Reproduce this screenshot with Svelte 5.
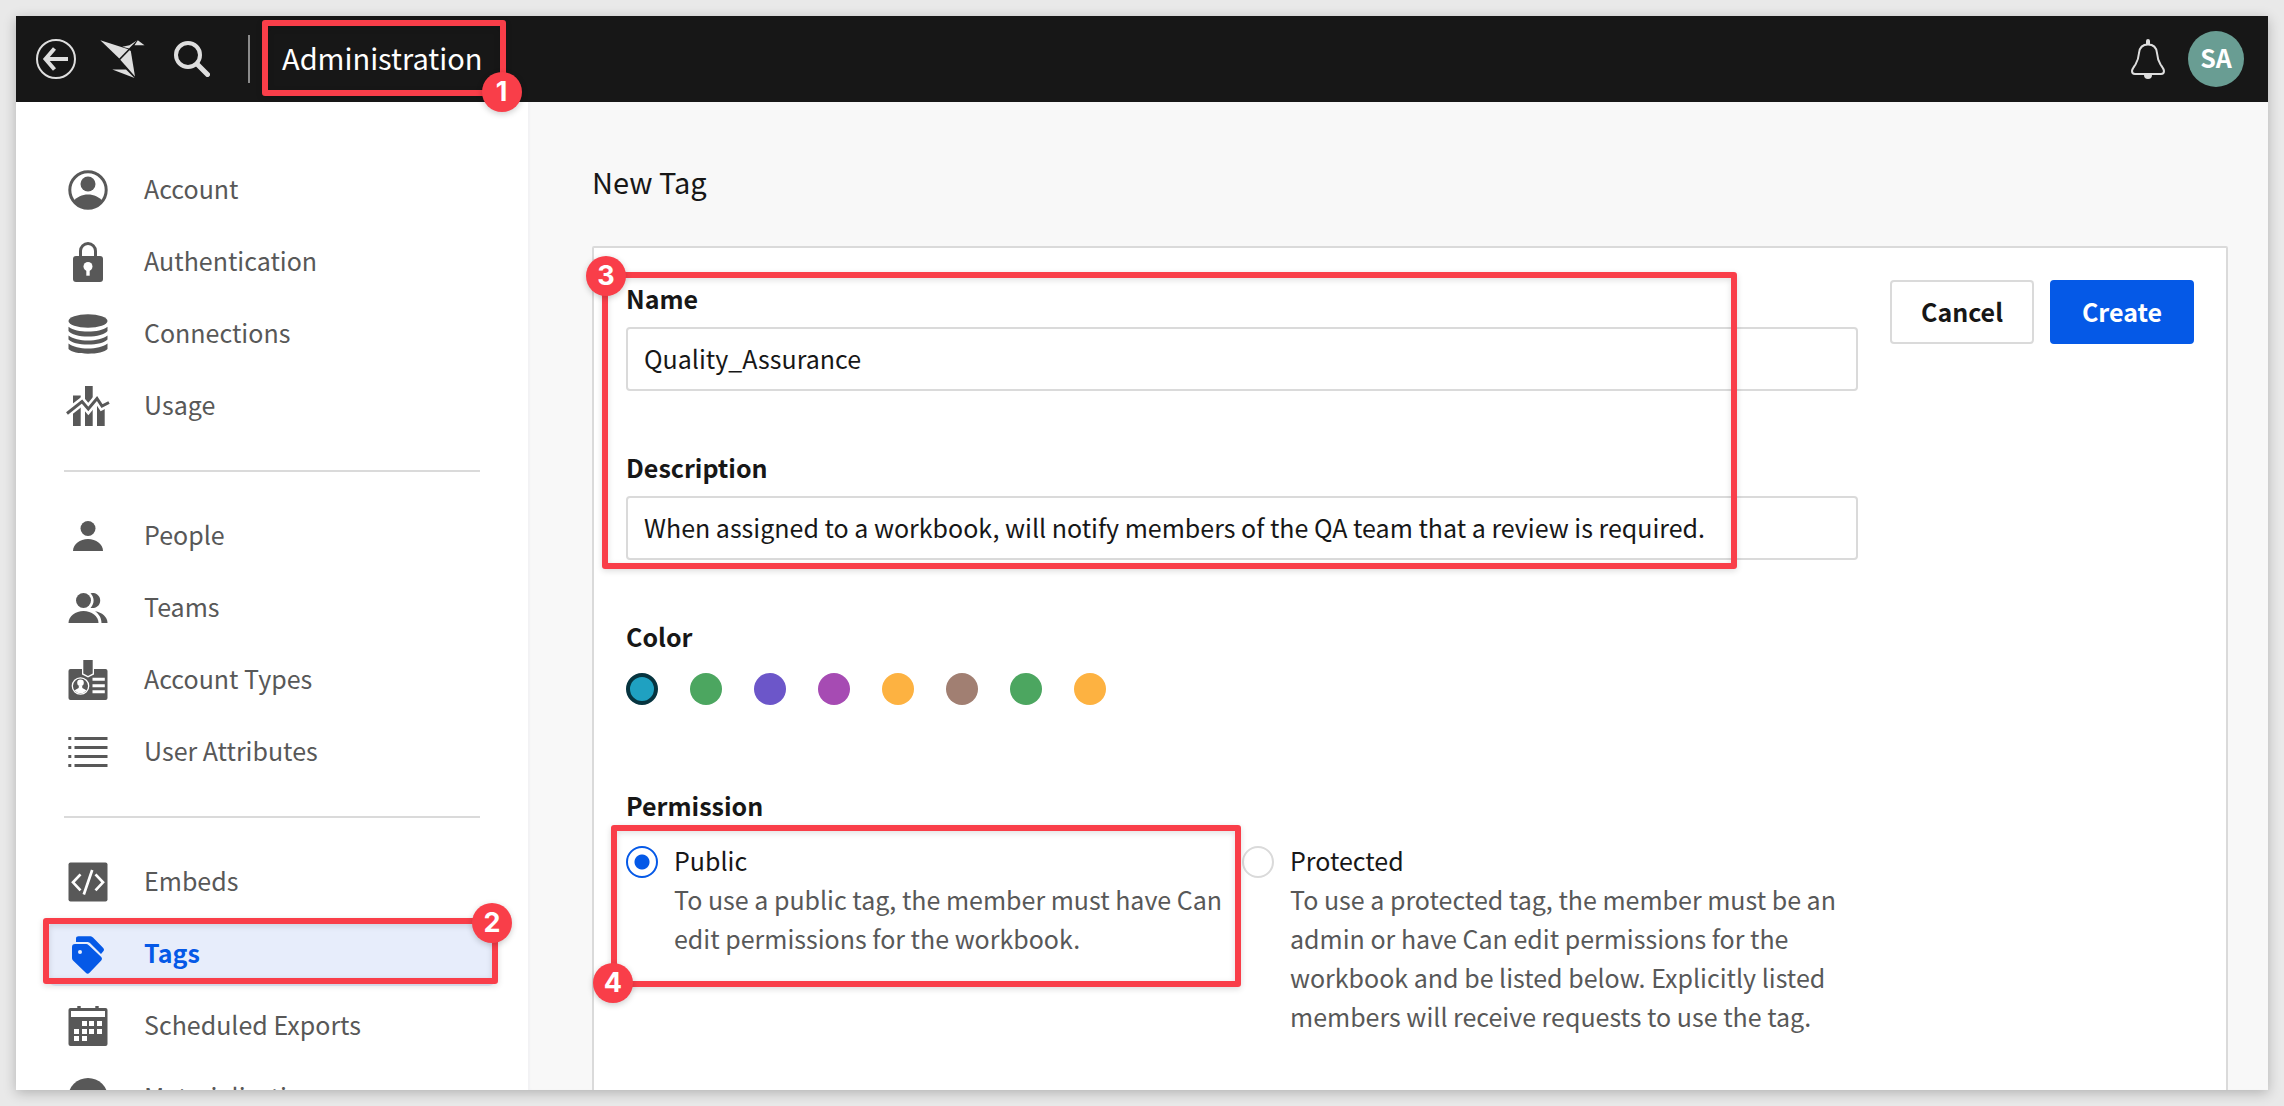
<script>
  const groups = [
    [
      { id: 'account', label: 'Account' },
      { id: 'auth', label: 'Authentication' },
      { id: 'connections', label: 'Connections' },
      { id: 'usage', label: 'Usage' }
    ],
    [
      { id: 'people', label: 'People' },
      { id: 'teams', label: 'Teams' },
      { id: 'types', label: 'Account Types' },
      { id: 'attributes', label: 'User Attributes' }
    ],
    [
      { id: 'embeds', label: 'Embeds' },
      { id: 'tags', label: 'Tags' },
      { id: 'exports', label: 'Scheduled Exports' },
      { id: 'materializations', label: 'Materializations' }
    ]
  ];

  const current = 'tags';

  const swatches = [
    { name: 'Teal', value: '#1fa1c1' },
    { name: 'Green', value: '#4ca660' },
    { name: 'Indigo', value: '#6c56c9' },
    { name: 'Purple', value: '#a64bb3' },
    { name: 'Amber', value: '#fdb241' },
    { name: 'Brown', value: '#a17f72' },
    { name: 'Green 2', value: '#4ca660' },
    { name: 'Amber 2', value: '#fdb241' }
  ];

  const permissions = [
    {
      id: 'public',
      title: 'Public',
      text: 'To use a public tag, the member must have Can edit permissions for the workbook.'
    },
    {
      id: 'protected',
      title: 'Protected',
      text: 'To use a protected tag, the member must be an admin or have Can edit permissions for the workbook and be listed below. Explicitly listed members will receive requests to use the tag.'
    }
  ];

  // Lit day cells of the calendar icon
  const days = [
    [14, 15], [21, 15], [29, 15],
    [6, 23], [14, 23], [21, 23], [29, 23],
    [6, 30], [14, 30]
  ];

  let name = $state('Quality_Assurance');
  let description = $state(
    'When assigned to a workbook, will notify members of the QA team that a review is required.'
  );
  let color = $state(0);
  let permission = $state('public');
</script>

<div class="page">
  <div class="window">
    <header>
      <button class="icon-button" aria-label="Back">
        <svg width="40" height="40" viewBox="0 0 40 40" fill="none" stroke="#dedede">
          <circle cx="20" cy="20" r="19" stroke-width="2" />
          <path d="M32 20H10M18.5 9.5 9.5 20l9 10.500" stroke-width="4" />
        </svg>
      </button>
      <a class="logo" href="#home" aria-label="Home">
        <svg width="46" height="40" viewBox="0 0 46 40" fill="#dedede">
          <path d="M.3 1.300 28.300 10.300 19.300 19.500Z" />
          <path d="M22.300 7.700 29.500 6.300 36.800 1.500 29 9.500Z" />
          <path d="M37.800 1.300 44.500 6.300H34.500Z" />
          <path d="M29.500 11.200 30.800 12 35 37.500 20.300 20.700Z" />
          <path d="M12.300 30.500H26L34.500 39Z" />
        </svg>
      </a>
      <button class="icon-button search" aria-label="Search">
        <svg width="36" height="36" viewBox="0 0 36 36" fill="none" stroke="#dedede">
          <circle cx="14" cy="14" r="12" stroke-width="4" />
          <path d="m23 23 10.500 10.500" stroke-width="5" stroke-linecap="round" />
        </svg>
      </button>
      <span class="divider"></span>
      <div class="section">
        Administration
        <div class="mark mark-1"><span class="badge">1</span></div>
      </div>
      <div class="tools">
        <button class="icon-button" aria-label="Notifications">
          <svg width="36" height="40" viewBox="0 0 36 40">
            <path
              d="M18 5.500c-5.500 0-8.500 3.500-9 8.500-.5 6-1 7.500-3.500 11.500C3.500 28.500 2 30 2 32c0 2 1 3 3 3h26c2 0 3-1 3-3 0-2-1.500-3.500-3.500-6.500C28 21.500 27.500 20 27 14c-.5-5-3.500-8.500-9-8.500Z"
              fill="none"
              stroke="#dedede"
              stroke-width="2"
            />
            <path d="M16 5V2a2 2 0 0 1 4 0v3ZM14 36h8a4 4 0 0 1-8 0Z" fill="#dedede" />
          </svg>
        </button>
        <button class="avatar" aria-label="User menu">SA</button>
      </div>
    </header>

    <div class="body">
      <nav>
        {#each groups as group, g}
          {#if g > 0}<hr />{/if}
          <ul>
            {#each group as item}
              <li>
                <a href={'#' + item.id} class:active={item.id === current}>
                  <svg width="40" height="40" viewBox="0 0 40 40" fill="currentColor" aria-hidden="true">
                    {#if item.id === 'account'}
                      <circle cx="20" cy="20" r="18.2" fill="none" stroke="currentColor" stroke-width="3" />
                      <circle cx="20" cy="14" r="7.500" />
                      <path d="M5.500 31C9 27 14 24.500 20 24.500S31 27 34.500 31A19 19 0 0 1 5.500 31Z" />
                    {:else if item.id === 'auth'}
                      <path d="M12.500 15V9a7.500 7.500 0 0 1 15 0v6" fill="none" stroke="currentColor" stroke-width="3" />
                      <rect x="5" y="14" width="30" height="26" rx="3" />
                      <circle cx="20" cy="24.500" r="4.500" fill="#fff" />
                      <path d="M18.300 26h3.400v7.700h-3.400Z" fill="#fff" />
                    {:else if item.id === 'connections'}
                      <ellipse cx="20" cy="7" rx="19.500" ry="6.800" />
                      <path d="M.5 12.700C5 16 12 17.500 20 17.500S35 16 39.500 12.700V17C37 20.500 29 22.500 20 22.500S3 20.500.5 17Z" />
                      <path d="M.5 21.500C5 25 12 26.500 20 26.500S35 25 39.500 21.500V25.500C37 28.500 29 30.500 20 30.500S3 28.500.5 25.500Z" />
                      <path d="M.5 29.500C5 33 12 34.500 20 34.500S35 33 39.500 29.500V35C37 38 29 39.700 20 39.700S3 38 .5 35Z" />
                    {:else if item.id === 'usage'}
                      <path d="M5 9.500h7.700V40H5ZM17 0h7.700V40H17ZM29 20h7.700V40H29Z" />
                      <path d="M-2 28 14 15.500l6.300 7.500L29 12.500l5 7.500 8-4" fill="none" stroke="#fff" stroke-width="8" />
                      <path d="M-1 27.500 14 15.500l6.300 7.500L29 12.500l5 7.500 7-3.500" fill="none" stroke="currentColor" stroke-width="3" />
                    {:else if item.id === 'people'}
                      <circle cx="20" cy="12.500" r="7.500" />
                      <path d="M5 35C5 28 12 23 20 23s15 5 15 12Z" />
                    {:else if item.id === 'teams'}
                      <circle cx="15.500" cy="12.500" r="7.500" />
                      <path d="M22.500 5.200A7.600 7.600 0 1 1 22.500 19.800C26.700 15.500 26.700 9.500 22.500 5.200Z" />
                      <path d="M.5 35c0-7 7-12 15-12s15 5 15 12Z" />
                      <path d="M27 23.200c7 1 12.500 5.800 12.500 11.800h-6C33.500 30 31 26 27 23.200Z" />
                    {:else if item.id === 'types'}
                      <rect x=".5" y="9" width="39" height="31" rx="2" />
                      <path d="M14 7h12v7.500l-6 3-6-3Z" fill="#fff" />
                      <path d="M15.300 0h9.400v13.500l-4.700 2.500-4.700-2.500Z" />
                      <circle cx="12.500" cy="26" r="8.200" fill="none" stroke="#fff" stroke-width="1.300" />
                      <circle cx="12.500" cy="22.700" r="3.300" fill="#fff" />
                      <path d="M6.500 30.500c2-2 4-1.500 4.300-3v-2h3.400v2c.3 1.500 2.300 1 4.300 3a8 8 0 0 1-12 0Z" fill="#fff" />
                      <path d="M24.500 17.700h12.300v3H24.500ZM24.500 24.200h12.300v3H24.500ZM24.500 30.200h12.300v3H24.500Z" fill="#fff" />
                    {:else if item.id === 'attributes'}
                      <path d="M.3 5h3v3h-3ZM6.500 5h33v3h-33ZM.3 14h3v3h-3ZM6.500 14h33v3h-33ZM.3 23h3v3h-3ZM6.500 23h33v3h-33ZM.3 32h3v3h-3ZM6.500 32h33v3h-33Z" />
                    {:else if item.id === 'embeds'}
                      <rect x=".5" y=".5" width="39" height="39" rx="2" />
                      <path d="m12.500 12.300-7.500 8 7.500 8M27.500 12.300l7.500 8-7.500 8M24.200 8l-8.400 24.500" fill="none" stroke="#fff" stroke-width="2.700" />
                    {:else if item.id === 'tags'}
                      <path d="M8 8V4.500C8 3 9 2.200 10.500 2.200H21.500C23 2.200 24 2.600 25 3.600L35 13.700C36.300 15 36.300 16 35.300 17.200L33 20 22.500 9.500C21.500 8.500 20.500 8 19 8Z" />
                      <path d="M4 13c0-2 1-3 3-3h10c2 0 3 .4 4.300 1.700L33 22.800c1.300 1.300 1.300 2.700 0 4L21.500 38.800c-1.200 1.200-2.500 1.200-3.700 0L5.300 26.700C4.300 25.700 4 24.800 4 23.500Z" />
                      <circle cx="12" cy="18" r="2" fill="#e7edfb" />
                    {:else if item.id === 'exports'}
                      <rect x=".5" y="2" width="39" height="38" rx="2" />
                      <path d="M9.300 0h3.400v3H9.300ZM27.300 0h3.400v3h-3.400Z" />
                      <path d="M3 5h34v6H3Z" fill="#fff" />
                      {#each days as [x, y]}
                        <rect {x} {y} width="5" height="5" fill="#fff" />
                      {/each}
                    {:else}
                      <circle cx="20" cy="20" r="20" />
                    {/if}
                  </svg>
                  <span class="item-label">{item.label}</span>
                  {#if item.id === current}
                    <div class="mark mark-2"><span class="badge">2</span></div>
                  {/if}
                </a>
              </li>
            {/each}
          </ul>
        {/each}
      </nav>

      <main>
        <h1>New Tag</h1>
        <form class="card" onsubmit={(e) => e.preventDefault()}>
          <div class="fields">
            <div class="pair">
              <div class="field">
                <label for="tag-name">Name</label>
                <input id="tag-name" class="text" type="text" bind:value={name} />
              </div>
              <div class="field">
                <label for="tag-description">Description</label>
                <input id="tag-description" class="text" type="text" bind:value={description} />
              </div>
              <div class="mark mark-3"><span class="badge">3</span></div>
            </div>

            <fieldset>
              <legend>Color</legend>
              <div class="swatches">
                {#each swatches as swatch, i}
                  <input
                    type="radio"
                    name="color"
                    aria-label={swatch.name}
                    value={i}
                    bind:group={color}
                    style="background-color: {swatch.value}"
                  />
                {/each}
              </div>
            </fieldset>

            <fieldset class="permission">
              <legend>Permission</legend>
              <div class="options">
                {#each permissions as option}
                  <div class="option">
                    <input
                      type="radio"
                      name="permission"
                      id={'permission-' + option.id}
                      value={option.id}
                      bind:group={permission}
                    />
                    <label for={'permission-' + option.id}>
                      <span class="option-title">{option.title}</span>
                      <span class="option-text">{option.text}</span>
                    </label>
                    {#if option.id === 'public'}
                      <div class="mark mark-4"><span class="badge">4</span></div>
                    {/if}
                  </div>
                {/each}
              </div>
            </fieldset>
          </div>

          <div class="actions">
            <button type="button" class="button">Cancel</button>
            <button type="submit" class="button primary">Create</button>
          </div>
        </form>
      </main>
    </div>
  </div>
</div>

<style>
  :global(body) {
    background: #e9e9e9;
  }

  .page {
    box-sizing: border-box;
    height: 100vh;
    padding: 16px;
    overflow: hidden;
    font: 400 25px/39px 'Noto Sans CJK JP', 'Source Sans Pro', sans-serif;
    color: #171717;
  }

  .page :is(button, input) {
    font: inherit;
    color: inherit;
    margin: 0;
  }

  .window {
    display: flex;
    flex-direction: column;
    height: 100%;
    box-shadow: 0 3px 12px rgba(0, 0, 0, 0.24);
  }

  header {
    display: flex;
    align-items: center;
    flex: none;
    height: 86px;
    padding: 0 24px 0 20px;
    background: #171717;
    color: #fff;
  }

  .icon-button,
  .logo {
    display: flex;
    padding: 0;
    border: 0;
    background: none;
    cursor: pointer;
  }

  .logo {
    margin: 0 28px 0 24px;
  }

  .divider {
    width: 2px;
    height: 48px;
    margin: 0 32px 0 38px;
    background: #8b8b8b;
  }

  .section {
    position: relative;
    padding-bottom: 4px;
    font-size: 29px;
  }

  .tools {
    display: flex;
    align-items: center;
    gap: 22px;
    margin-left: auto;
  }

  .page .avatar {
    width: 56px;
    height: 56px;
    padding: 0 0 3px;
    border: 0;
    border-radius: 50%;
    background: #699d93;
    color: #fff;
    font-weight: 700;
  }

  .body {
    display: flex;
    flex: 1;
    min-height: 0;
    overflow: hidden;
  }

  nav {
    box-sizing: border-box;
    flex: none;
    width: 512px;
    padding: 56px 32px;
    background: #fff;
    color: #585858;
  }

  ul {
    display: flex;
    flex-direction: column;
    gap: 8px;
    margin: 0;
    padding: 0;
    list-style: none;
  }

  nav hr {
    height: 2px;
    margin: 32px 16px;
    border: 0;
    background: #dadada;
  }

  nav a {
    position: relative;
    display: flex;
    align-items: center;
    gap: 36px;
    height: 64px;
    padding: 0 20px;
    border-radius: 8px;
    color: inherit;
    text-decoration: none;
  }

  nav svg {
    flex: none;
    overflow: visible;
  }

  .item-label {
    padding-bottom: 3px;
  }

  nav a.active {
    background: #e7edfb;
    color: #0559e7;
    font-weight: 700;
  }

  main {
    box-sizing: border-box;
    display: flex;
    flex: 1;
    flex-direction: column;
    min-width: 0;
    padding: 60px 40px 0 64px;
    background: #f8f8f8;
    box-shadow: inset 2px 0 2px #f2f2f4;
  }

  h1 {
    margin: 0 0 45px;
    font-size: 29px;
    font-weight: 400;
    line-height: 39px;
  }

  .card {
    display: flex;
    flex: none;
    gap: 32px;
    align-items: flex-start;
    min-height: 100%;
    padding: 32px;
    border: 2px solid #dadada;
    border-radius: 2px;
    background: #fff;
  }

  .fields {
    display: flex;
    flex: 1;
    flex-direction: column;
    gap: 58px;
    min-width: 0;
  }

  .pair {
    position: relative;
    display: flex;
    flex-direction: column;
    gap: 58px;
  }

  .field {
    display: flex;
    flex-direction: column;
    gap: 10px;
  }

  .field label,
  legend {
    padding: 0;
    font-weight: 700;
    line-height: 37px;
  }

  .page .text {
    box-sizing: border-box;
    width: 100%;
    height: 64px;
    padding: 0 16px 2px;
    border: 2px solid #dadada;
    border-radius: 4px;
    background: #fff;
  }

  fieldset {
    min-width: 0;
    margin: 0;
    padding: 0;
    border: 0;
  }

  .permission {
    margin-top: 24px;
  }

  .swatches {
    display: flex;
    gap: 32px;
    padding-top: 18px;
  }

  input[type='radio'] {
    box-sizing: border-box;
    flex: none;
    appearance: none;
    width: 32px;
    height: 32px;
    border-radius: 50%;
  }

  .swatches input:checked {
    border: 4px solid #06343f;
  }

  .options {
    display: grid;
    grid-template-columns: 1fr 1fr;
    align-items: start;
    padding-top: 17px;
  }

  .option {
    position: relative;
    display: flex;
    gap: 16px;
  }

  .page .option input {
    margin-top: 5px;
    border: 2px solid #dadada;
    background: #fff;
  }

  .page .option input:checked {
    border-color: #0559e7;
    background: radial-gradient(circle, #0559e7 7px, #fff 8px);
  }

  .option-title,
  .option-text {
    display: block;
  }

  .option-text {
    color: #585858;
  }

  .actions {
    display: flex;
    gap: 16px;
  }

  .page .button {
    width: 144px;
    height: 64px;
    padding: 0 0 2px;
    border: 2px solid #dadada;
    border-radius: 4px;
    background: #fff;
    font-weight: 700;
  }

  .page .primary {
    border-color: #0559e7;
    background: #0559e7;
    color: #fff;
  }

  /* Numbered callouts laid over the interface */
  .mark {
    position: absolute;
    z-index: 1;
    border: 6px solid #f93e49;
    border-radius: 3px;
    box-shadow:
      0 2px 6px rgba(0, 0, 0, 0.14),
      inset 0 2px 6px rgba(0, 0, 0, 0.12);
    pointer-events: none;
  }

  .mark-1 {
    inset: -18px -23px -15px -20px;
  }

  .mark-2 {
    inset: -4px -2px 2px -5px;
  }

  .mark-3 {
    inset: -8px 121px -9px -24px;
  }

  .mark-4 {
    inset: -16px 1px -29px -15px;
  }

  .badge {
    position: absolute;
    width: 40px;
    height: 40px;
    border-radius: 50%;
    background: #f93e49;
    box-shadow: 0 2px 6px rgba(0, 0, 0, 0.2);
    color: #fff;
    font: 700 27px/40px Inter, sans-serif;
    text-align: center;
  }

  .mark-1 .badge {
    right: -22px;
    bottom: -22px;
  }

  .mark-2 .badge {
    top: -21px;
    right: -20px;
  }

  .mark-3 .badge {
    top: -22px;
    left: -22px;
  }

  .mark-4 .badge {
    bottom: -22px;
    left: -24px;
  }
</style>
